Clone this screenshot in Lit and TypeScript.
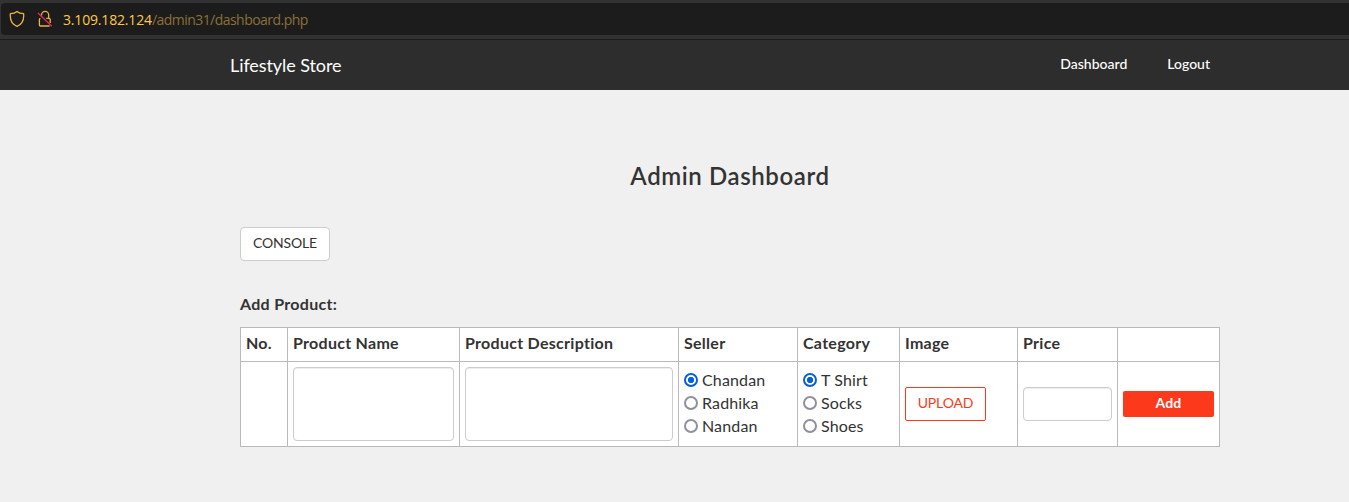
import { LitElement, html, css } from "lit";
import { customElement } from "lit/decorators.js";

@customElement("app-root")
export class AppRoot extends LitElement {
  static styles = css`
    :host { display: block; height: 502px; overflow: hidden; background: #f0f0f0; color: #333; font: 16px/23px Lato, sans-serif; font-variant-ligatures: none; }
    * { box-sizing: border-box; }
    .chrome { height: 40px; padding: 3px 0 4px 1px; background: #323232; border-bottom: 1px solid #1c1c1c; }
    .address { height: 32px; display: flex; align-items: center; background: #1c1c1c; border-radius: 4px 0 0 4px; padding: 0 0 0 8px; }
    .address svg { display: block; }
    .lock { margin-left: 12px; }
    .url { margin-left: 10px; font: 14px/20px "Open Sans", sans-serif; color: #8b7038; white-space: nowrap; padding-top: 2px; }
    .ip { color: #ffc84a; letter-spacing: -0.17px; }
    .path { letter-spacing: -0.54px; }
    .nav { height: 50px; background: #2d2d2d; color: #fff; display: flex; align-items: center; justify-content: space-between; padding: 0 139px 0 230px; white-space: nowrap; }
    .brand { font-size: 18px; letter-spacing: -0.08px; }
    .links { display: flex; gap: 40px; font-size: 14px; font-weight: 500; padding-bottom: 3px; }
    .main { width: 980px; margin: 0 0 0 240px; display: flex; flex-direction: column; align-items: flex-start; }
    h1 { margin: 70px 0 0; width: 100%; height: 32px; text-align: center; font-size: 24px; line-height: 32px; font-weight: 600; letter-spacing: 0.6px; }
    button { font-family: inherit; font-variant-ligatures: none; margin: 0; padding: 0; white-space: nowrap; }
    .console { margin-top: 35px; width: 90px; height: 34px; padding-bottom: 3px; font-size: 14px; letter-spacing: -0.15px; color: #333; background: #fff; border: 1px solid #ccc; border-radius: 4px; }
    h2 { margin: 31px 0 0; height: 24px; font-size: 16px; line-height: 23px; font-weight: 700; letter-spacing: 0.3px; }
    .table { margin-top: 11px; display: grid; grid-template-columns: 47px 172px 219px 119px 102px 118px 100px 102px; grid-template-rows: 34px 85px; background: #fff; border: solid #b9b9b9; border-width: 1px 0 0 1px; }
    .cell { border: solid #b9b9b9; border-width: 0 1px 1px 0; padding: 5px; display: flex; align-items: center; }
    .head { font-weight: 700; letter-spacing: 0.28px; white-space: nowrap; padding: 4px 5px 7px; line-height: 22px; }
    textarea, input.price { display: block; width: 100%; border: 1px solid #ccc; border-radius: 4px; background: #fff; box-shadow: inset 0 1px 1px rgba(0,0,0,.075); resize: none; padding: 6px; outline: 0; }
    textarea { height: 74px; }
    input.price { height: 34px; }
    .radios { display: flex; flex-direction: column; padding-bottom: 2px; }
    label { display: flex; align-items: center; height: 23px; gap: 4px; white-space: nowrap; letter-spacing: 0.14px; }
    label span { height: 23px; line-height: 21px; }
    .radio { appearance: none; margin: 0; width: 14px; height: 14px; border: 2px solid #8f8f9d; border-radius: 50%; background: #fff; }
    .radio:checked { border-color: #0060df; background: radial-gradient(circle, #0060df 2.8px, #fff 3.4px); }
    .upload { width: 81px; height: 34px; padding-bottom: 3px; background: #fff; border: 1px solid #fc3a1b; border-radius: 2px; color: #fc3a1b; font-size: 14px; letter-spacing: -0.15px; }
    .add { width: 91px; height: 26px; padding-bottom: 3px; background: #fc3a1b; border: 0; border-radius: 2px; color: #fff; font-size: 14px; font-weight: 700; letter-spacing: 0.2px; }
  `;

  private choices(name: string, items: string[]) {
    return html`<div class="radios">
      ${items.map((t, i) => html`<label><input class="radio" type="radio" name=${name} ?checked=${i === 0} /><span>${t}</span></label>`)}
    </div>`;
  }

  render() {
    const heads = ["No.", "Product Name", "Product Description", "Seller", "Category", "Image", "Price", ""];
    return html`
      <div class="chrome"><div class="address">
        <svg width="16" height="18" viewBox="0 0 16 18" fill="none" stroke="#e8b447" stroke-width="1.3" stroke-linejoin="round"><path d="M8 1.4 C6.3 2.9 3.8 3.5 1.4 3.6 C.8 9.5 2.8 14.2 8 16.4 C13.2 14.2 15.2 9.5 14.6 3.6 C12.2 3.5 9.7 2.9 8 1.4Z"/></svg>
        <svg class="lock" width="16" height="18" viewBox="0 0 16 18" fill="none" stroke="#e8b447" stroke-width="1.3"><path d="M4.5 5.4 V5 a3.5 3.5 0 0 1 7.2 0 V8.4 M9.3 8.4 H12.2 q1 0 1 1 V13 M3.4 8.4 q-1 0 -1 1 V15 q0 1 1 1 H12.6"/><path d="M1 3 L14.8 16.3" stroke="#e22850" stroke-width="1.4"/></svg>
        <div class="url"><span class="ip">3.109.182.124</span><span class="path">/admin31/dashboard.php</span></div>
      </div></div>
      <nav class="nav"><span class="brand">Lifestyle Store</span><div class="links"><span>Dashboard</span><span>Logout</span></div></nav>
      <main class="main">
        <h1>Admin Dashboard</h1>
        <button class="console">CONSOLE</button>
        <h2>Add Product:</h2>
        <div class="table">
          ${heads.map((h) => html`<div class="cell head">${h}</div>`)}
          <div class="cell"></div>
          <div class="cell"><textarea></textarea></div>
          <div class="cell"><textarea></textarea></div>
          <div class="cell">${this.choices("seller", ["Chandan", "Radhika", "Nandan"])}</div>
          <div class="cell">${this.choices("category", ["T Shirt", "Socks", "Shoes"])}</div>
          <div class="cell"><button class="upload">UPLOAD</button></div>
          <div class="cell"><input class="price" type="text" /></div>
          <div class="cell"><button class="add">Add</button></div>
        </div>
      </main>
    `;
  }
}
